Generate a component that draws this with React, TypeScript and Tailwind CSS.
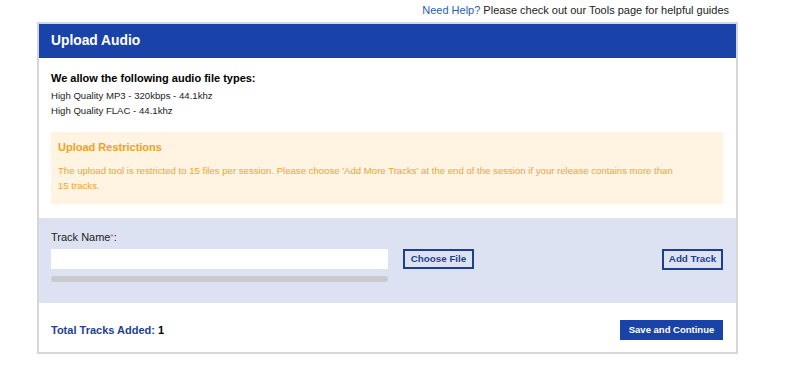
export default function App() {
  return (
    <div className="w-[800px] h-[390px] bg-white overflow-hidden" style={{ fontFamily: '"Liberation Sans", Arial, sans-serif' }}>
      <div className="h-[20px] flex items-center justify-end pr-[71px] text-[11px] leading-[20px] text-[#222]">
        <span className="text-[#2a5db0]">Need Help?</span>
        <span>&nbsp;Please check out our Tools page for helpful guides</span>
      </div>
      <div className="mt-[2px] ml-[37px] w-[701px] border-2 border-[#d6d6d6]">
        <div className="h-[34px] bg-[#1a43aa] flex items-center px-[12px] pt-[1px]">
          <span className="text-white font-bold text-[13.8px]">Upload Audio</span>
        </div>
        <div className="pt-[12px] pb-[14px] pl-[12px] pr-[13px]">
          <div className="text-[11px] leading-[16px] font-bold text-black">We allow the following audio file types:</div>
          <div className="mt-[2px] text-[9.6px] leading-[15px] text-[#222]">High Quality MP3 - 320kbps - 44.1khz</div>
          <div className="text-[9.6px] leading-[15px] text-[#222]">High Quality FLAC - 44.1khz</div>
          <div className="mt-[14px] bg-[#fff3e1] pt-[7px] pb-[11px] px-[7px]">
            <div className="text-[11px] leading-[16px] font-bold text-[#f0a21e]">Upload Restrictions</div>
            <div className="mt-[8px] max-w-[625px] text-[9.6px] leading-[15px] text-[#f4a52c]">
              The upload tool is restricted to 15 files per session. Please choose 'Add More Tracks' at the end of the session if your release contains more than 15 tracks.
            </div>
          </div>
        </div>
        <div className="bg-[#dce2f2] pt-[11px] pb-[21px] pl-[12px] pr-[13px]">
          <div className="text-[11px] leading-[16px] text-[#222]">
            Track Name<span className="text-[#e05050] text-[8px] align-top">*</span>:
          </div>
          <div className="mt-[4px] flex items-start">
            <div className="flex flex-col">
              <div className="w-[337px] h-[20px] bg-white" />
              <div className="mt-[7px] w-[337px] h-[6px] rounded-full bg-[#c9cacd]" />
            </div>
            <button className="ml-[15px] w-[71px] h-[20px] border-2 border-[#1c3f94] text-[#1c3f94] text-[9.8px] font-bold flex items-center justify-center bg-transparent">
              Choose File
            </button>
            <div className="flex-1" />
            <button className="w-[61px] h-[21px] border-2 border-[#1c3f94] text-[#1c3f94] text-[9.8px] font-bold flex items-center justify-center bg-transparent">
              Add Track
            </button>
          </div>
        </div>
        <div className="pt-[17px] pb-[12px] pl-[12px] pr-[13px] flex items-center justify-between">
          <div className="text-[11px] font-bold text-[#1f3f8f]">
            Total Tracks Added: <span className="text-black">1</span>
          </div>
          <button className="w-[103px] h-[20px] bg-[#1a43aa] text-white text-[9.5px] font-bold flex items-center justify-center">
            Save and Continue
          </button>
        </div>
      </div>
    </div>
  );
}
